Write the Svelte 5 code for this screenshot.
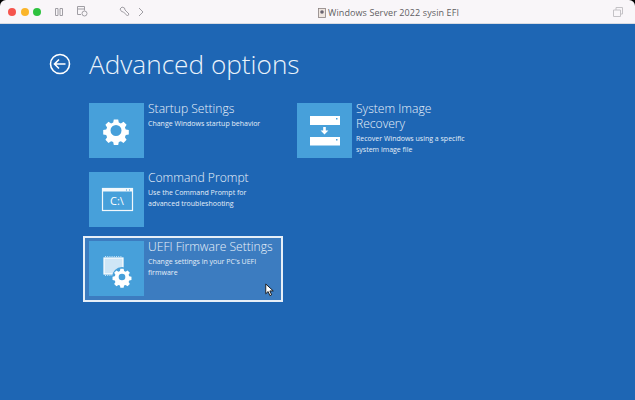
<script>
  const left = [
    { title: 'Startup Settings', desc: 'Change Windows startup behavior', icon: 'gear' },
    { title: 'Command Prompt', desc: 'Use the Command Prompt for advanced troubleshooting', icon: 'cmd' },
    { title: 'UEFI Firmware Settings', desc: "Change settings in your PC's UEFI firmware", icon: 'uefi', active: true }
  ];
  const right = [
    { title: 'System Image Recovery', desc: 'Recover Windows using a specific system image file', icon: 'image' }
  ];
  const columns = [left, right];
  const gearPath = 'M-2.2-11h4.4l.6 3 2.1.9 2.6-1.7 3.1 3.1-1.7 2.6.9 2.1 3 .6v4.4l-3 .6-.9 2.1 1.7 2.6-3.1 3.1-2.6-1.7-2.1.9-.6 3h-4.4l-.6-3-2.1-.9-2.6 1.7-3.1-3.1 1.7-2.6-.9-2.1-3-.6v-4.4l3-.6.9-2.1-1.7-2.6 3.1-3.1 2.6 1.7 2.1-.9z';
</script>

<div class="window">
  <header class="titlebar">
    <div class="lights">
      <span class="light red"></span>
      <span class="light yellow"></span>
      <span class="light green"></span>
    </div>
    <svg class="tb pause" viewBox="0 0 8 8" width="8" height="8"><path d="M.5.5h2.500v7H.5zM5 .5h2.500v7H5z" /></svg>
    <svg class="tb snap" viewBox="0 0 11 11" width="11" height="11">
      <path d="M7.500 4.500V.5H.5v8H4M.5 3h7" />
      <circle cx="7.500" cy="7.500" r="2.500" />
    </svg>
    <svg class="tb wrench" viewBox="0 0 11 11" width="11" height="11">
      <path d="M1 3 3 1l2.500 1 .5 2 4 4-1.500 2-4-4-2-.5z" />
    </svg>
    <svg class="tb chevron" viewBox="0 0 6 10" width="6" height="10"><path d="M1 1l4 4-4 4" /></svg>
    <div class="doc">
      <svg viewBox="0 0 8 10" width="8" height="10">
        <rect x="0.500" y="0.500" width="7" height="9" fill="#efe6e0" stroke="#8a8280" stroke-width="0.800" />
        <circle cx="4" cy="4" r="1.800" fill="#6a6470" />
      </svg>
      <span>Windows Server 2022 sysin EFI</span>
    </div>
    <svg class="tb copy" viewBox="0 0 12 12" width="12" height="12">
      <path d="M1.500 4h7v6.500h-7zM4 4V1.500h6.500V8H8.500" />
    </svg>
  </header>

  <main class="screen">
    <div class="heading">
      <svg class="back" viewBox="0 0 22 22" width="22" height="22">
        <circle cx="11" cy="11" r="9.500" />
        <path d="M5.500 11h11M10 6.500 5.500 11l4.500 4.500" />
      </svg>
      <h1>Advanced options</h1>
    </div>

    <div class="columns">
      {#each columns as col}
        <div class="column">
          {#each col as item}
            <div class="option" class:active={item.active}>
              <div class="tile">
                <svg viewBox="0 0 55 55" width="55" height="55">
                  {#if item.icon === 'gear'}
                    <g transform="translate(27 27.500)">
                      <path fill="#fff" fill-rule="evenodd" d={gearPath + 'M0-5.500a5.500 5.500 0 1 0 0 11a5.500 5.500 0 1 0 0-11z'} />
                    </g>
                  {:else if item.icon === 'cmd'}
                    <rect x="13.500" y="16.500" width="30" height="22" fill="none" stroke="#f2f8fc" stroke-width="1.200" />
                    <rect x="13.500" y="16.500" width="30" height="3" fill="#f2f8fc" />
                    <rect x="37" y="17.500" width="1" height="1" fill="#47a0da" />
                    <rect x="40" y="17.500" width="1" height="1" fill="#47a0da" />
                    <text x="21" y="33" class="cmdtext">C:\</text>
                  {:else if item.icon === 'uefi'}
                    <path stroke="#e4f1fa" stroke-width="0.800" stroke-dasharray="1 1.200" d="M16 15.500h17M16 34.500h12" />
                    <rect x="15" y="17" width="19" height="16" fill="#cfe6f6" stroke="#fff" stroke-width="1.200" />
                    <circle cx="33" cy="36" r="10" fill="#47a0da" />
                    <g transform="translate(33 36) scale(0.74)">
                      <path fill="#fff" fill-rule="evenodd" d={gearPath + 'M0-4.500a4.500 4.500 0 1 0 0 9a4.500 4.500 0 1 0 0-9z'} />
                    </g>
                  {:else}
                    <rect x="13" y="13" width="30" height="9" fill="#fff" />
                    <rect x="13" y="34" width="30" height="8.500" fill="#fff" />
                    <rect x="39" y="15" width="1.500" height="1.500" fill="#47a0da" />
                    <rect x="39" y="36" width="1.500" height="1.500" fill="#47a0da" />
                    <path fill="#fff" d="M26.200 24h2.600v3.500h2.600l-3.900 4-3.900-4h2.600z" />
                  {/if}
                </svg>
              </div>
              <div class="text">
                <h2>{item.title}</h2>
                <p>{item.desc}</p>
              </div>
            </div>
          {/each}
        </div>
      {/each}
    </div>

    <svg class="cursor" viewBox="0 0 12 18" width="9" height="14">
      <path d="M1 1v13l3.200-3 2.300 5.500 2.300-1-2.300-5.300H11z" />
    </svg>
  </main>
</div>

<style>
  :global(body) {
    margin: 0;
    background: #000;
  }

  .window {
    width: 635px;
    height: 400px;
    display: flex;
    flex-direction: column;
    overflow: hidden;
    border-radius: 6px 6px 0 0;
    font-family: "Open Sans", "Liberation Sans", sans-serif;
  }

  .titlebar {
    height: 23px;
    flex: none;
    display: flex;
    align-items: center;
    background: #f9f6f9;
    border-bottom: 1px solid #d8dbe2;
    color: #77767a;
  }

  .lights {
    display: flex;
    gap: 4.500px;
    margin-left: 8px;
  }

  .light {
    width: 8px;
    height: 8px;
    border-radius: 50%;
  }

  .red { background: #f5544d; }
  .yellow { background: #fab52b; }
  .green { background: #2ec23f; }

  .tb {
    flex: none;
    fill: none;
    stroke: #a09ea4;
    stroke-width: 1;
  }

  .pause { margin-left: 14px; }
  .snap { margin-left: 14px; }
  .wrench { margin-left: 31px; }
  .chevron { margin-left: 8px; }
  .copy { margin-left: auto; margin-right: 11px; stroke: #c4c2c6; }

  .doc {
    position: absolute;
    left: 318px;
    top: 7px;
    display: flex;
    align-items: center;
    gap: 2px;
    font-size: 9px;
    line-height: 11px;
    letter-spacing: 0.1px;
    color: #5f5e62;
  }

  .screen {
    position: relative;
    flex: 1;
    background: #1e66b4;
    color: #fff;
    padding-top: 24px;
  }

  .heading {
    display: flex;
    align-items: center;
    margin-left: 49px;
    height: 32px;
  }

  .back {
    fill: none;
    stroke: #fff;
    stroke-width: 1.600;
    margin-right: 18px;
  }

  h1 {
    margin: 0;
    font-size: 26.200px;
    font-weight: 300;
    line-height: 32px;
    color: #eaf3fb;
  }

  .columns {
    display: flex;
    margin-top: 17px;
    margin-left: 83px;
    gap: 8px;
  }

  .column {
    display: flex;
    flex-direction: column;
    gap: 3px;
    width: 200px;
  }

  .option {
    display: flex;
    height: 66px;
    box-sizing: border-box;
    padding: 4px 4px;
    border: 2px solid transparent;
    gap: 4px;
  }

  .option.active {
    margin-top: 1px;
    padding-top: 3px;
    background: #3c7cc0;
    border-color: #e6eff8;
  }

  .tile {
    flex: none;
    width: 55px;
    height: 55px;
    background: #47a0da;
  }

  .tile svg {
    display: block;
  }

  .cmdtext {
    font-size: 11px;
    fill: #fff;
    font-family: "Open Sans", sans-serif;
  }

  .text {
    min-width: 0;
    width: 118px;
    margin-top: -2px;
  }

  .option.active .text {
    width: 129px;
  }

  h2 {
    margin: 0;
    font-size: 12.100px;
    line-height: 15px;
    font-weight: 300;
    color: #e8f1fa;
  }

  p {
    margin: 3px 0 0;
    max-width: 118px;
    font-size: 7px;
    line-height: 10.500px;
    color: #e4eef8;
  }

  .cursor {
    position: absolute;
    left: 265px;
    top: 259px;
    fill: #fff;
    stroke: #111;
    stroke-width: 1.200;
  }
</style>
